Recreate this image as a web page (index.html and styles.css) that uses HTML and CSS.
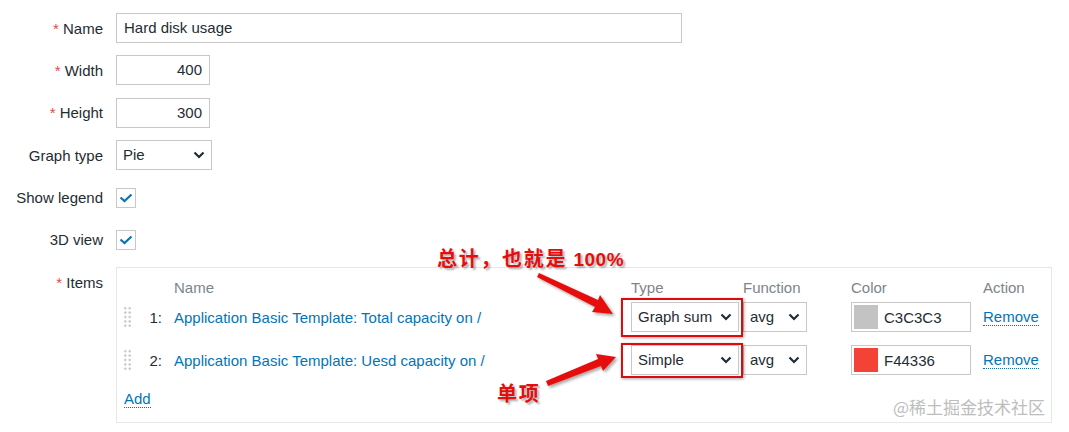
FILE: index.html
```html
<!DOCTYPE html>
<html lang="en">
<head>
    <meta charset="UTF-8">
    <title>Graph</title>
    <link rel="stylesheet" href="styles.css">
</head>
<body>
    <div class="form">
        <div class="row">
            <label class="lbl"><span class="req">*</span> Name</label>
            <div class="field"><div class="input wide">Hard disk usage</div></div>
        </div>
        <div class="row">
            <label class="lbl"><span class="req">*</span> Width</label>
            <div class="field"><div class="input num">400</div></div>
        </div>
        <div class="row">
            <label class="lbl"><span class="req">*</span> Height</label>
            <div class="field"><div class="input num">300</div></div>
        </div>
        <div class="row">
            <label class="lbl">Graph type</label>
            <div class="field">
                <div class="select graph-type">Pie
                    <svg class="chev" width="12" height="8" viewBox="0 0 12 8"><path d="M1.5 1.5 L6 6 L10.5 1.5" fill="none" stroke="#1f2c33" stroke-width="2.2"/></svg>
                </div>
            </div>
        </div>
        <div class="row">
            <label class="lbl">Show legend</label>
            <div class="field">
                <div class="checkbox"><svg width="14" height="10" viewBox="0 0 14 10"><path d="M1.5 4.5 L5.5 8 L12.5 1.5" fill="none" stroke="#0275b8" stroke-width="2.2"/></svg></div>
            </div>
        </div>
        <div class="row">
            <label class="lbl">3D view</label>
            <div class="field">
                <div class="checkbox"><svg width="14" height="10" viewBox="0 0 14 10"><path d="M1.5 4.5 L5.5 8 L12.5 1.5" fill="none" stroke="#0275b8" stroke-width="2.2"/></svg></div>
            </div>
        </div>
        <div class="row items-row">
            <label class="lbl items-lbl"><span class="req">*</span> Items</label>
            <div class="items">
                <div class="items-grid head">
                    <span></span><span></span>
                    <span>Name</span>
                    <span>Type</span>
                    <span>Function</span>
                    <span>Color</span>
                    <span>Action</span>
                </div>
                <div class="items-grid item">
                    <span class="handle"></span>
                    <span class="idx">1:</span>
                    <a class="link">Application Basic Template: Total capacity on /</a>
                    <div class="select type-sel">Graph sum
                        <svg class="chev" width="12" height="8" viewBox="0 0 12 8"><path d="M1.5 1.5 L6 6 L10.5 1.5" fill="none" stroke="#1f2c33" stroke-width="2.2"/></svg>
                    </div>
                    <div class="select func-sel">avg
                        <svg class="chev" width="12" height="8" viewBox="0 0 12 8"><path d="M1.5 1.5 L6 6 L10.5 1.5" fill="none" stroke="#1f2c33" stroke-width="2.2"/></svg>
                    </div>
                    <div class="color-input"><span class="swatch grey"></span>C3C3C3</div>
                    <a class="link dotted">Remove</a>
                </div>
                <div class="items-grid item second">
                    <span class="handle"></span>
                    <span class="idx">2:</span>
                    <a class="link">Application Basic Template: Uesd capacity on /</a>
                    <div class="select type-sel">Simple
                        <svg class="chev" width="12" height="8" viewBox="0 0 12 8"><path d="M1.5 1.5 L6 6 L10.5 1.5" fill="none" stroke="#1f2c33" stroke-width="2.2"/></svg>
                    </div>
                    <div class="select func-sel">avg
                        <svg class="chev" width="12" height="8" viewBox="0 0 12 8"><path d="M1.5 1.5 L6 6 L10.5 1.5" fill="none" stroke="#1f2c33" stroke-width="2.2"/></svg>
                    </div>
                    <div class="color-input"><span class="swatch red"></span>F44336</div>
                    <a class="link dotted">Remove</a>
                </div>
                <div class="add-row"><a class="link dotted">Add</a></div>
            </div>
        </div>
    </div>

    <!-- Annotations drawn over the screenshot -->
    <div class="note note-total">总计，也就是 <span class="latin">100%</span></div>
    <div class="note note-single">单项</div>
    <div class="mark-box box-1"></div>
    <div class="mark-box box-2"></div>
    <svg class="arrows" width="1069" height="432" viewBox="0 0 1069 432">
        <defs>
            <filter id="sh" x="-20%" y="-20%" width="140%" height="140%">
                <feDropShadow dx="2" dy="2" stdDeviation="1.5" flood-color="#000" flood-opacity="0.35"/>
            </filter>
        </defs>
        <g filter="url(#sh)" fill="#e60d0d">
            <path d="M537 277 L539 273 L598 300 L600 295 L613 314 L592 312 L595 307 Z"/>
            <path d="M548 386 L546 381 L598 359 L596 354 L616 357 L603 371 L601 366 Z"/>
        </g>
    </svg>
    <div class="watermark">@稀土掘金技术社区</div>
</body>
</html>
```

FILE: styles.css
```css
/* Base */
body {
    margin: 0;
    font-family: "Liberation Sans", Arial, sans-serif;
    font-size: 15px;
    color: #1f2c33;
    background: #ffffff;
    width: 1069px;
    height: 432px;
    position: relative;
    overflow: hidden;
}

.form {
    padding-top: 13px;
    display: flex;
    flex-direction: column;
    gap: 12.4px;
}

.row {
    display: flex;
    align-items: center;
    height: 30px;
}

.lbl {
    width: 103px;
    text-align: right;
    padding-right: 13px;
    flex-shrink: 0;
}

.req {
    color: #d64e4e;
}

.field {
    display: flex;
    align-items: center;
}

/* Inputs */
.input {
    height: 28px;
    line-height: 28px;
    border: 1px solid #c8c8c8;
    padding: 0 7px;
    box-sizing: content-box;
}

.input.wide {
    width: 550px;
}

.input.num {
    width: 78px;
    text-align: right;
}

.select {
    height: 28px;
    line-height: 28px;
    border: 1px solid #c8c8c8;
    padding: 0 6px;
    display: flex;
    justify-content: space-between;
    align-items: center;
    box-sizing: content-box;
}

.select .chev {
    flex-shrink: 0;
}

.graph-type {
    width: 82px;
}

.checkbox {
    width: 18px;
    height: 18px;
    border: 1px solid #c8c8c8;
    display: flex;
    align-items: center;
    justify-content: center;
}

/* Items table */
.items-row {
    height: auto;
    align-items: flex-start;
}

.items-lbl {
    padding-top: 7px;
}

.items {
    width: 934px;
    border: 1px solid #e6e6e6;
    padding: 8px 0 10px 0;
}

.items-grid {
    display: grid;
    grid-template-columns: 6px 20px 31px 457px 112px 108px 132px auto;
    align-items: center;
}

.items-grid.head {
    height: 22px;
    color: #7d8589;
}

.items-grid.head span:first-child {
    grid-column: 1 / span 2;
}

.items-grid.item {
    height: 38px;
}

.items-grid.item.second {
    margin-top: 5px;
}

.items-grid.item .handle {
    grid-column: 2;
}

.handle {
    width: 10px;
    height: 22px;
    background-image: radial-gradient(circle, #c4c4c4 1.1px, transparent 1.3px);
    background-size: 4.5px 4.4px;
    background-position: 0 0;
}

.idx {
    text-align: right;
    padding-right: 12px;
}

.link {
    color: #0275b8;
    text-decoration: none;
}

.link.dotted {
    border-bottom: 1px dotted #0275b8;
    justify-self: start;
    line-height: 17px;
}

.type-sel {
    width: 94px;
}

.func-sel {
    width: 50px;
}

.color-input {
    width: 118px;
    height: 28px;
    border: 1px solid #c8c8c8;
    display: flex;
    align-items: center;
}

.swatch {
    width: 24px;
    height: 24px;
    margin: 0 6px 0 2px;
}

.swatch.grey {
    background: #c3c3c3;
}

.swatch.red {
    background: #f44336;
}

.add-row {
    padding: 11px 0 0 7px;
    height: 22px;
}

/* Annotations */
.note {
    position: absolute;
    color: #e60d0d;
    font-family: "Noto Sans CJK SC", "Liberation Sans", sans-serif;
    font-weight: bold;
    font-size: 20px;
    line-height: 28px;
    letter-spacing: 1.7px;
    text-shadow: 2px 2px 2px rgba(0, 0, 0, 0.3);
    white-space: nowrap;
}

.note .latin {
    font-family: "Liberation Sans", Arial, sans-serif;
    font-size: 19px;
    letter-spacing: 0.5px;
}

.note-total {
    left: 437px;
    top: 244px;
}

.note-single {
    left: 497px;
    top: 379px;
}

.mark-box {
    position: absolute;
    border: 2px solid #e00a0a;
    box-shadow: 1px 1px 3px rgba(0, 0, 0, 0.35);
    width: 118px;
}

.box-1 {
    left: 621px;
    top: 298px;
    height: 35px;
}

.box-2 {
    left: 621px;
    top: 343px;
    height: 31px;
}

.arrows {
    position: absolute;
    left: 0;
    top: 0;
}

.watermark {
    position: absolute;
    left: 893px;
    top: 394px;
    font-family: "Noto Sans CJK SC", sans-serif;
    font-size: 17px;
    color: #bdbdbd;
    white-space: nowrap;
}
```
